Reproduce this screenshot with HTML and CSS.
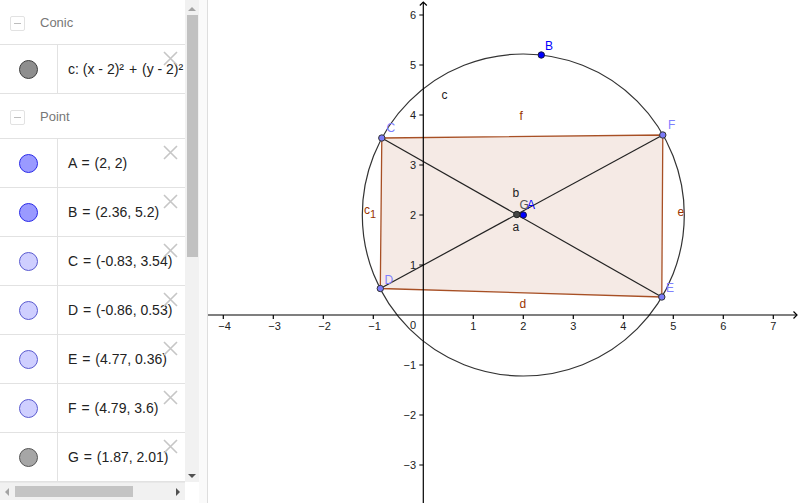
FILE: index.html
```html
<!DOCTYPE html>
<html>
<head>
<meta charset="utf-8">
<link rel="stylesheet" href="styles.css">
</head>
<body>
<div class="app">
  <div class="algebra">
    <div class="list">
      <div class="group-head">
        <span class="collapse"></span><span class="group-name">Conic</span>
      </div>
      <div class="item">
        <div class="marker"><span class="dot dot-gray"></span></div>
        <div class="formula">c: (x - 2)² <span class="op">+</span> (y - 2)²</div>
        <svg class="del" viewBox="0 0 15 15"><path d="M1 1L14 14M14 1L1 14"/></svg>
      </div>
      <div class="group-head">
        <span class="collapse"></span><span class="group-name">Point</span>
      </div>
      <div class="item">
        <div class="marker"><span class="dot dot-blue"></span></div>
        <div class="formula">A <span class="op">=</span> (2, 2)</div>
        <svg class="del" viewBox="0 0 15 15"><path d="M1 1L14 14M14 1L1 14"/></svg>
      </div>
      <div class="item">
        <div class="marker"><span class="dot dot-blue"></span></div>
        <div class="formula">B <span class="op">=</span> (2.36, 5.2)</div>
        <svg class="del" viewBox="0 0 15 15"><path d="M1 1L14 14M14 1L1 14"/></svg>
      </div>
      <div class="item">
        <div class="marker"><span class="dot dot-light"></span></div>
        <div class="formula">C <span class="op">=</span> (-0.83, 3.54)</div>
        <svg class="del" viewBox="0 0 15 15"><path d="M1 1L14 14M14 1L1 14"/></svg>
      </div>
      <div class="item">
        <div class="marker"><span class="dot dot-light"></span></div>
        <div class="formula">D <span class="op">=</span> (-0.86, 0.53)</div>
        <svg class="del" viewBox="0 0 15 15"><path d="M1 1L14 14M14 1L1 14"/></svg>
      </div>
      <div class="item">
        <div class="marker"><span class="dot dot-light"></span></div>
        <div class="formula">E <span class="op">=</span> (4.77, 0.36)</div>
        <svg class="del" viewBox="0 0 15 15"><path d="M1 1L14 14M14 1L1 14"/></svg>
      </div>
      <div class="item">
        <div class="marker"><span class="dot dot-light"></span></div>
        <div class="formula">F <span class="op">=</span> (4.79, 3.6)</div>
        <svg class="del" viewBox="0 0 15 15"><path d="M1 1L14 14M14 1L1 14"/></svg>
      </div>
      <div class="item">
        <div class="marker"><span class="dot dot-lgray"></span></div>
        <div class="formula">G <span class="op">=</span> (1.87, 2.01)</div>
        <svg class="del" viewBox="0 0 15 15"><path d="M1 1L14 14M14 1L1 14"/></svg>
      </div>
    </div>
    <div class="vscroll">
      <span class="arrow arrow-up"></span>
      <span class="vthumb"></span>
      <span class="arrow arrow-down"></span>
    </div>
    <div class="hscroll">
      <span class="arrow arrow-left"></span>
      <span class="hthumb"></span>
      <span class="arrow arrow-right"></span>
    </div>
    <div class="corner"></div>
  </div>
  <div class="splitter"></div>
  <svg class="graph" viewBox="208 0 592 503" width="592" height="503">
    <polygon class="poly" points="381.8,138 662.8,135 661.8,297 380.3,288.5"/>
    <line class="seg" x1="381.8" y1="138" x2="661.8" y2="297"/>
    <line class="seg" x1="380.3" y1="288.5" x2="662.8" y2="135"/>
    <circle class="conic" cx="523.3" cy="215" r="161"/>
    <g class="axis">
      <line x1="208" y1="315" x2="797" y2="315"/>
      <path d="M793.5 311.5L797 315L793.5 318.5"/>
      <line x1="423.3" y1="2" x2="423.3" y2="503"/>
      <path d="M419.8 5.5L423.3 2L426.8 5.5"/>
      <path d="M223.3 315v4M273.3 315v4M323.3 315v4M373.3 315v4M473.3 315v4M523.3 315v4M573.3 315v4M623.3 315v4M673.3 315v4M723.3 315v4M773.3 315v4"/>
      <path d="M423.3 15h-4M423.3 65h-4M423.3 115h-4M423.3 165h-4M423.3 215h-4M423.3 265h-4M423.3 365h-4M423.3 415h-4M423.3 465h-4"/>
    </g>
    <g class="ticklabel xl">
      <text x="224.5" y="330">−4</text>
      <text x="274.5" y="330">−3</text>
      <text x="324.5" y="330">−2</text>
      <text x="374.5" y="330">−1</text>
      <text x="473.3" y="330">1</text>
      <text x="523.3" y="330">2</text>
      <text x="573.3" y="330">3</text>
      <text x="623.3" y="330">4</text>
      <text x="673.3" y="330">5</text>
      <text x="723.3" y="330">6</text>
      <text x="773.3" y="330">7</text>
    </g>
    <g class="ticklabel yl">
      <text x="416" y="329">0</text>
      <text x="416" y="19">6</text>
      <text x="416" y="69">5</text>
      <text x="416" y="119">4</text>
      <text x="416" y="169">3</text>
      <text x="416" y="219">2</text>
      <text x="416" y="269">1</text>
      <text x="416" y="369">−1</text>
      <text x="416" y="419">−2</text>
      <text x="416" y="469">−3</text>
    </g>
    <circle class="pt pt-free" cx="523.3" cy="215" r="3.2"/>
    <circle class="pt pt-free" cx="541.3" cy="55" r="3.2"/>
    <circle class="pt pt-dep" cx="381.8" cy="138" r="3.2"/>
    <circle class="pt pt-dep" cx="380.3" cy="288.5" r="3.2"/>
    <circle class="pt pt-dep" cx="661.8" cy="297" r="3.2"/>
    <circle class="pt pt-dep" cx="662.8" cy="135" r="3.2"/>
    <circle class="pt pt-g" cx="516.8" cy="214.5" r="3.2"/>
    <text class="lbl lbl-free" x="545" y="50">B</text>
    <text class="lbl lbl-free" x="527" y="209">A</text>
    <text class="lbl lbl-g" x="519.5" y="209">G</text>
    <text class="lbl lbl-dep" x="386.5" y="132">C</text>
    <text class="lbl lbl-dep" x="384.5" y="284">D</text>
    <text class="lbl lbl-dep" x="666" y="292">E</text>
    <text class="lbl lbl-dep" x="668" y="129">F</text>
    <text class="lbl lbl-black" x="441.5" y="99">c</text>
    <text class="lbl lbl-black" x="512.5" y="197">b</text>
    <text class="lbl lbl-black" x="512.5" y="231">a</text>
    <text class="lbl lbl-brown" x="519.5" y="120">f</text>
    <text class="lbl lbl-brown" x="519.5" y="308">d</text>
    <text class="lbl lbl-brown" x="677.5" y="216">e</text>
    <text class="lbl lbl-brown" x="364" y="214">c<tspan class="sub" dy="4">1</tspan></text>
  </svg>
</div>
</body>
</html>
```
FILE: styles.css
```css
html, body {
  margin: 0;
  padding: 0;
  background: #fff;
}
body {
  width: 800px;
  height: 503px;
  overflow: hidden;
  font-family: "Liberation Sans", Arial, sans-serif;
}
.app {
  display: flex;
  width: 800px;
  height: 503px;
}
.algebra {
  display: grid;
  grid-template-columns: 185px 14px;
  grid-template-rows: 482px 18px;
  width: 199px;
  height: 503px;
  flex: none;
}
.list {
  overflow: hidden;
  position: relative;
}
.group-head {
  display: flex;
  align-items: center;
  height: 44px;
  border-bottom: 1px solid #e2e2e2;
  box-sizing: content-box;
}
.collapse {
  width: 13px;
  height: 13px;
  border: 1px solid #e2e2e2;
  border-radius: 2px;
  margin-left: 10px;
  margin-top: 2px;
  position: relative;
  flex: none;
}
.collapse::after {
  content: "";
  position: absolute;
  left: 3px;
  right: 3px;
  top: 6px;
  height: 1px;
  background: #bdbdbd;
}
.group-name {
  margin-left: 15px;
  margin-top: 1px;
  font-size: 13px;
  color: #777;
}
.item {
  display: flex;
  height: 48px;
  border-bottom: 1px solid #e2e2e2;
  position: relative;
}
.marker {
  width: 57px;
  flex: none;
  border-right: 1px solid #e2e2e2;
  display: flex;
  align-items: center;
  justify-content: center;
}
.dot {
  width: 17px;
  height: 17px;
  border-radius: 50%;
  border: 1.5px solid #444;
  display: block;
}
.dot-gray {
  background: #8e8e8e;
  border-color: #3e3e3e;
}
.dot-lgray {
  background: #a6a6a6;
  border-color: #555;
}
.dot-blue {
  background: #9a9aff;
  border-color: #2a2ae8;
}
.dot-light {
  background: #cfcfff;
  border-color: #5a5ad0;
}
.formula {
  padding-left: 10px;
  display: flex;
  align-items: center;
  font-size: 14px;
  color: #222;
  white-space: pre;
}
.op {
  margin: 0 1px;
}
.del {
  position: absolute;
  right: 7px;
  top: 6px;
  width: 15px;
  height: 15px;
  fill: none;
  stroke: #c6c6c6;
  stroke-width: 1.6;
}
.vscroll {
  background: #f1f1f1;
  position: relative;
  display: flex;
  flex-direction: column;
  align-items: center;
}
.vthumb {
  display: block;
  width: 11px;
  margin-top: 4px;
  height: 242px;
  background: #c1c1c1;
}
.arrow {
  width: 0;
  height: 0;
  display: block;
}
.arrow-up {
  margin-top: 7px;
  border-left: 4px solid transparent;
  border-right: 4px solid transparent;
  border-bottom: 4px solid #a3a3a3;
}
.arrow-down {
  margin-top: auto;
  margin-bottom: 4px;
  border-left: 4px solid transparent;
  border-right: 4px solid transparent;
  border-top: 4px solid #505050;
}
.hscroll {
  background: #f1f1f1;
  display: flex;
  align-items: center;
  border-top: 1px solid #e8e8e8;
}
.arrow-left {
  margin-left: 5px;
  border-top: 4px solid transparent;
  border-bottom: 4px solid transparent;
  border-right: 4px solid #a3a3a3;
}
.hthumb {
  display: block;
  width: 118px;
  height: 11px;
  margin-left: 6px;
  background: #c4c4c4;
}
.arrow-right {
  margin-left: auto;
  margin-right: 5px;
  border-top: 4px solid transparent;
  border-bottom: 4px solid transparent;
  border-left: 4px solid #505050;
}
.corner {
  background: #fff;
}
.splitter {
  width: 8px;
  flex: none;
  background: #fafafa;
  border-right: 1px solid #dedede;
}
.graph {
  display: block;
  flex: none;
}
.poly {
  fill: rgb(245, 234, 229);
  stroke: #993300;
  stroke-width: 1.3;
  stroke-opacity: 0.85;
}
.seg {
  stroke: #222;
  stroke-width: 1.2;
}
.conic {
  fill: none;
  stroke: #333;
  stroke-width: 1.2;
}
.axis {
  stroke: #000;
  stroke-width: 1.2;
  fill: none;
}
.ticklabel text {
  font-family: "Liberation Sans", Arial, sans-serif;
  font-size: 11px;
  fill: #222;
}
.xl text {
  text-anchor: middle;
}
.yl text {
  text-anchor: end;
}
.pt {
  stroke-width: 1;
}
.pt-free {
  fill: #0000ff;
  stroke: #1a1a40;
}
.pt-dep {
  fill: #7b7bf8;
  stroke: #333;
}
.pt-g {
  fill: #454545;
  stroke: #222;
}
.lbl {
  font-family: "Liberation Sans", Arial, sans-serif;
  font-size: 12px;
}
.lbl-free { fill: #0000ff; }
.lbl-dep { fill: #7f7fff; }
.lbl-g { fill: #555; }
.lbl-black { fill: #222; }
.lbl-brown { fill: #993300; }
.sub { font-size: 11px; }
```
